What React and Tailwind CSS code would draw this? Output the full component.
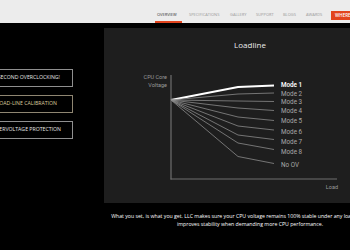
import React from "react";

const modes = [
  { label: "Mode 1", y: 57, path: "M67 72 L134 59 L170 57.5", main: true },
  { label: "Mode 2", y: 65.5, path: "M67 72 L134 66 L170 65" },
  { label: "Mode 3", y: 74, path: "M67 72 L134 73 L170 73.5" },
  { label: "Mode 4", y: 82.5, path: "M67 72 L134 80 L170 82.5" },
  { label: "Mode 5", y: 93, path: "M67 72 L134 89 L170 92.5" },
  { label: "Mode 6", y: 103.5, path: "M67 72 L134 98 L170 102" },
  { label: "Mode 7", y: 113.5, path: "M67 72 L134 107 L170 111.5" },
  { label: "Mode 8", y: 123.5, path: "M67 72 L134 115 L170 121.5" },
  { label: "No OV", y: 136.5, path: "M67 72 L134 128.5 L170 135.5" },
];

const navItems = [
  { label: "SPECIFICATIONS", w: "w-[41px]" },
  { label: "GALLERY", w: "w-[26px]" },
  { label: "SUPPORT", w: "w-[27px]" },
  { label: "BLOGS", w: "w-[23px]" },
  { label: "AWARDS", w: "w-[25px]" },
];

const App = () => {
  return (
    <div className="w-[350px] h-[250px] overflow-hidden bg-black font-['Open_Sans',sans-serif]">
      {/* Top nav */}
      <div className="h-[23px] bg-[#ececec] flex items-end pl-[155px]">
        <span className="w-[27px] shrink-0 pl-[2px] pb-[3px] border-b-2 border-[#e2451f] text-[4px] leading-[6px] text-[#333] whitespace-nowrap">
          OVERVIEW
        </span>
        <span className="w-[7px] shrink-0" />
        {navItems.map((item) => (
          <span
            key={item.label}
            className={`${item.w} shrink-0 pb-[5px] text-[4px] leading-[6px] text-[#9a9a9a] whitespace-nowrap`}
          >
            {item.label}
          </span>
        ))}
        <div className="mb-[3px] h-[9px] w-[30px] shrink-0 bg-[#e2451f] flex items-center pl-[4px] text-[4.5px] font-semibold text-white whitespace-nowrap">
          WHERE TO BUY
        </div>
      </div>

      <div className="flex">
        {/* Feature buttons */}
        <div className="w-[104px] shrink-0 pt-[46px] flex flex-col gap-[8px]">
          <div className="ml-[-30px] w-[103px] h-[18px] border border-[#8f8f8f] flex items-center justify-end pr-[12px] text-[5.2px] text-[#e6e6e6] whitespace-nowrap">
            ONE SECOND OVERCLOCKING!
          </div>
          <div className="ml-[-30px] w-[103px] h-[18px] border border-[#8f8672] flex items-center justify-end pr-[15px] text-[5.2px] text-[#dccb9e] whitespace-nowrap">
            LOAD-LINE CALIBRATION
          </div>
          <div className="ml-[-30px] w-[103px] h-[18px] border border-[#8f8f8f] flex items-center justify-end pr-[11px] text-[5.2px] text-[#e6e6e6] whitespace-nowrap">
            OVERVOLTAGE PROTECTION
          </div>
        </div>

        {/* Chart panel + caption */}
        <div className="w-[292px] shrink-0 pt-[5px]">
          <div className="h-[175px] bg-[#1e1e1e] relative">
            <div className="pt-[11px] text-center text-[8px] leading-[12px] text-[#ececec]">Loadline</div>
            <svg
              className="absolute left-0 top-0"
              width="292"
              height="175"
              viewBox="0 0 292 175"
              fontFamily="Roboto, 'Noto Sans', sans-serif"
            >
              <line x1="67" y1="47" x2="67" y2="151.5" stroke="#6e6e6e" strokeWidth="1.2" />
              <line x1="66.5" y1="151" x2="233" y2="151" stroke="#6e6e6e" strokeWidth="1.2" />
              {modes.map((m) => (
                <path
                  key={m.label}
                  d={m.path}
                  fill="none"
                  stroke={m.main ? "#ffffff" : "#8a8a8a"}
                  strokeWidth={m.main ? 2 : 0.8}
                />
              ))}
              {modes.map((m) => (
                <text
                  key={m.label + "t"}
                  x="177"
                  y={m.y + 2.3}
                  fontSize="6.3"
                  fill={m.main ? "#ffffff" : "#a8a8a8"}
                  fontWeight={m.main ? 600 : 400}
                >
                  {m.label}
                </text>
              ))}
              <text x="63" y="51" fontSize="5.5" fill="#9a9a9a" textAnchor="end">CPU Core</text>
              <text x="63" y="59" fontSize="5.5" fill="#9a9a9a" textAnchor="end">Voltage</text>
              <text x="234" y="161" fontSize="5.5" fill="#9a9a9a" textAnchor="end">Load</text>
            </svg>
          </div>
          <p className="mt-[9px] text-center text-[5.2px] leading-[8px] text-white whitespace-nowrap">
            What you set, is what you get. LLC makes sure your CPU voltage remains 100% stable under any load condition and
            <br />
            improves stability when demanding more CPU performance.
          </p>
        </div>
      </div>
    </div>
  );
};

export default App;
